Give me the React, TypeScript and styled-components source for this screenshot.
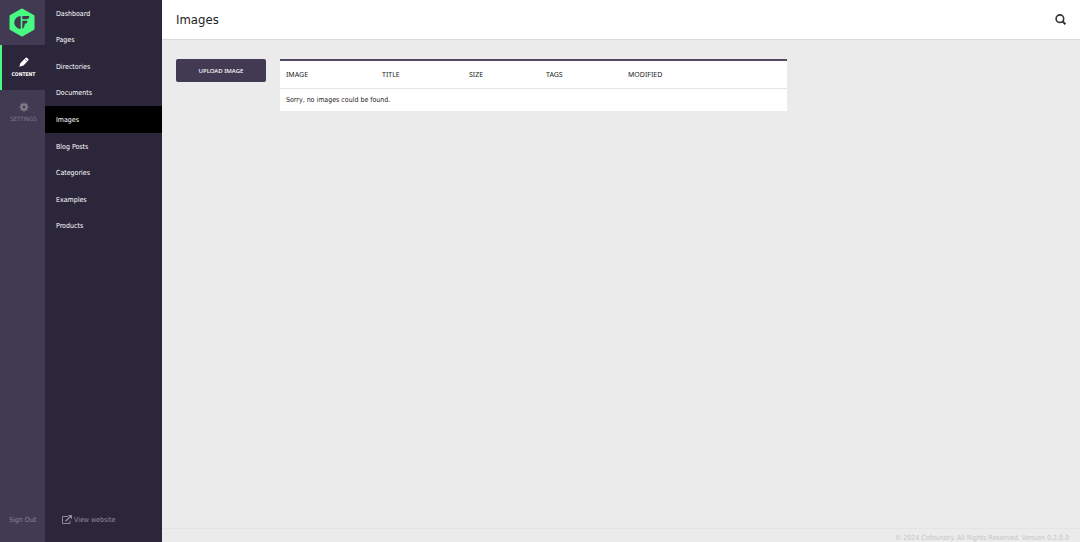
import React from "react";
import styled, { createGlobalStyle } from "styled-components";

const GlobalStyle = createGlobalStyle`
  * { box-sizing: border-box; }
  body {
    margin: 0;
    background: #ebebeb;
    color: #222;
    font: 7px/12px "DejaVu Sans Condensed", "Noto Sans", sans-serif;
  }
  a { color: inherit; text-decoration: none; }
  svg { display: block; }
`;

const Shell = styled.div`
  display: grid;
  grid-template-columns: 45px 117px minmax(0, 1fr);
  min-height: 100vh;
`;

const Rail = styled.nav`
  display: flex;
  flex-direction: column;
  background: #423952;
`;

const Logo = styled.a`
  display: flex;
  height: 45px;
  align-items: center;
  padding-left: 8px;
`;

const RailItem = styled.a<{ $active?: boolean }>`
  display: flex;
  height: 45px;
  flex-direction: column;
  align-items: center;
  gap: 1px;
  padding-top: 12px;
  border-left: 2px solid ${(p) => (p.$active ? "#49fb83" : "transparent")};
  background: ${(p) => (p.$active ? "#2c263b" : "transparent")};
  color: ${(p) => (p.$active ? "#fff" : "#837d8c")};
  font-size: ${(p) => (p.$active ? "5px" : "6px")};
  font-weight: ${(p) => (p.$active ? 700 : 400)};
`;

const SignOut = styled.a`
  margin-top: auto;
  padding: 0 0 16px 9px;
  color: #8b8494;
`;

const Side = styled.nav`
  display: flex;
  flex-direction: column;
  background: #2c263b;
`;

const Menu = styled.ul`
  display: grid;
  height: 239px;
  grid-auto-rows: 1fr;
  margin: 0;
  padding: 0;
  list-style: none;
`;

const MenuLink = styled.a<{ $active?: boolean }>`
  display: flex;
  height: 100%;
  align-items: center;
  padding: 1px 0 0 11px;
  background: ${(p) => (p.$active ? "#000" : "transparent")};
  color: #fff;
`;

const ViewSite = styled.a`
  display: flex;
  align-items: center;
  gap: 2px;
  margin-top: auto;
  padding: 0 0 16px 17px;
  color: #918c99;
`;

const Main = styled.div`
  display: flex;
  flex-direction: column;
`;

const Header = styled.header`
  display: flex;
  height: 40px;
  align-items: center;
  justify-content: space-between;
  padding: 0 14px;
  border-bottom: 1px solid #d9d9d9;
  background: #fff;
`;

const Title = styled.h1`
  margin: 0;
  font-size: 13px;
  font-weight: 400;
  line-height: 18px;
`;

const IconButton = styled.button`
  padding: 0;
  border: 0;
  background: none;
  color: #333;
  cursor: pointer;
`;

const Content = styled.main`
  display: flex;
  flex: 1;
  align-items: flex-start;
  gap: 14px;
  padding: 19px 14px;
`;

const UploadButton = styled.button`
  width: 90px;
  height: 23px;
  flex: none;
  padding: 0;
  border: 0;
  border-radius: 2px;
  background: #423952;
  color: #fff;
  font: 500 6px/12px "Noto Sans", sans-serif;
  cursor: pointer;
`;

const Table = styled.table`
  width: 57%;
  table-layout: fixed;
  border-collapse: separate;
  border-spacing: 0;
  border-top: 2px solid #52485f;
  background: #fff;
`;

const Col = styled.col<{ $width?: number }>`
  width: ${(p) => (p.$width ? `${p.$width}px` : "auto")};
`;

const Th = styled.th`
  height: 28px;
  padding: 0 6px;
  border-bottom: 1px solid #e5e5e5;
  font-family: "Noto Sans", sans-serif;
  font-weight: 400;
  text-align: left;
`;

const Td = styled.td`
  height: 22px;
  padding: 0 6px;
`;

const Footer = styled.footer`
  height: 14px;
  padding: 5px 11px 0 0;
  border-top: 1px solid #e4e4e4;
  color: #c6c6c6;
  line-height: 8px;
  text-align: right;
`;

const menu = [
  "Dashboard", "Pages", "Directories", "Documents", "Images",
  "Blog Posts", "Categories", "Examples", "Products",
];

const columns = [
  { label: "Image", width: 96 },
  { label: "Title", width: 87 },
  { label: "Size", width: 77 },
  { label: "Tags", width: 82 },
  { label: "Modified" },
];

const LogoMark = () => (
  <svg width="28" height="29" viewBox="0 0 28 29" aria-hidden="true">
    <path d="M14 2 25 8.200v12.600L14 27 3 20.800V8.200Z" fill="#49fb83" stroke="#49fb83" strokeWidth="3" strokeLinejoin="round" />
    <path d="M12.700 8v13a6.500 6.500 0 0 1 0-13ZM14.300 8h7c0 2-1 3.300-3 3.300h-4ZM14.300 12.800h5.200c0 2-1 3-2.800 3 0 2.600-.7 4.200-2.400 5.200Z" fill="#423952" />
  </svg>
);

const PenIcon = () => (
  <svg width="10" height="10" viewBox="0 0 10 10" fill="currentColor" aria-hidden="true">
    <path d="M6.400.9q.7-.8 1.400-.2l1.500 1.400q.6.600-.1 1.400L4.500 8.600.3 9.700 1.300 6.200Z" />
    <path d="M5.700 1.700 8.400 4.300" stroke="#2c263b" strokeWidth=".5" />
  </svg>
);

const CogIcon = () => (
  <svg width="10" height="10" viewBox="0 0 10 10" aria-hidden="true">
    <g fill="none" stroke="currentColor">
      <circle cx="5" cy="5" r="2.500" strokeWidth="2" />
      <path d="M5 .5v1.300M5 8.200v1.300M.5 5h1.300M8.200 5h1.300M1.800 1.800l1 1M7.200 7.200l1 1M8.200 1.800l-1 1M2.800 7.200l-1 1" strokeWidth="1.600" />
    </g>
  </svg>
);

const ExternalIcon = () => (
  <svg width="10" height="10" viewBox="0 0 10 10" aria-hidden="true">
    <path d="M6 1.500H.5v7h7.500V5.800" fill="none" stroke="currentColor" />
    <path d="M3.500 6.300 8 2" stroke="currentColor" strokeWidth="1.500" />
    <path d="M5.800 0H10v4.200Z" fill="currentColor" />
  </svg>
);

const SearchIcon = () => (
  <svg width="11" height="11" viewBox="0 0 11 11" fill="none" stroke="currentColor" aria-hidden="true">
    <circle cx="4.900" cy="4.700" r="3.800" strokeWidth="1.600" />
    <path d="m7.500 7.300 3 3" strokeWidth="2" />
  </svg>
);

export default function App() {
  return (
    <>
      <GlobalStyle />
      <Shell>
        <Rail>
          <Logo href="#" aria-label="Cofoundry"><LogoMark /></Logo>
          <RailItem href="#" $active><PenIcon />CONTENT</RailItem>
          <RailItem href="#"><CogIcon />SETTINGS</RailItem>
          <SignOut href="#">Sign Out</SignOut>
        </Rail>
        <Side>
          <Menu>
            {menu.map((item) => (
              <li key={item}>
                <MenuLink href="#" $active={item === "Images"}>{item}</MenuLink>
              </li>
            ))}
          </Menu>
          <ViewSite href="#"><ExternalIcon />View website</ViewSite>
        </Side>
        <Main>
          <Header>
            <Title>Images</Title>
            <IconButton type="button" aria-label="Search"><SearchIcon /></IconButton>
          </Header>
          <Content>
            <UploadButton type="button">UPLOAD IMAGE</UploadButton>
            <Table>
              <colgroup>
                {columns.map((c) => <Col key={c.label} $width={c.width} />)}
              </colgroup>
              <thead>
                <tr>{columns.map((c) => <Th key={c.label}>{c.label.toUpperCase()}</Th>)}</tr>
              </thead>
              <tbody>
                <tr><Td colSpan={columns.length}>Sorry, no images could be found.</Td></tr>
              </tbody>
            </Table>
          </Content>
          <Footer>© 2024 Cofoundry. All Rights Reserved. Version 0.2.0.0</Footer>
        </Main>
      </Shell>
    </>
  );
}
